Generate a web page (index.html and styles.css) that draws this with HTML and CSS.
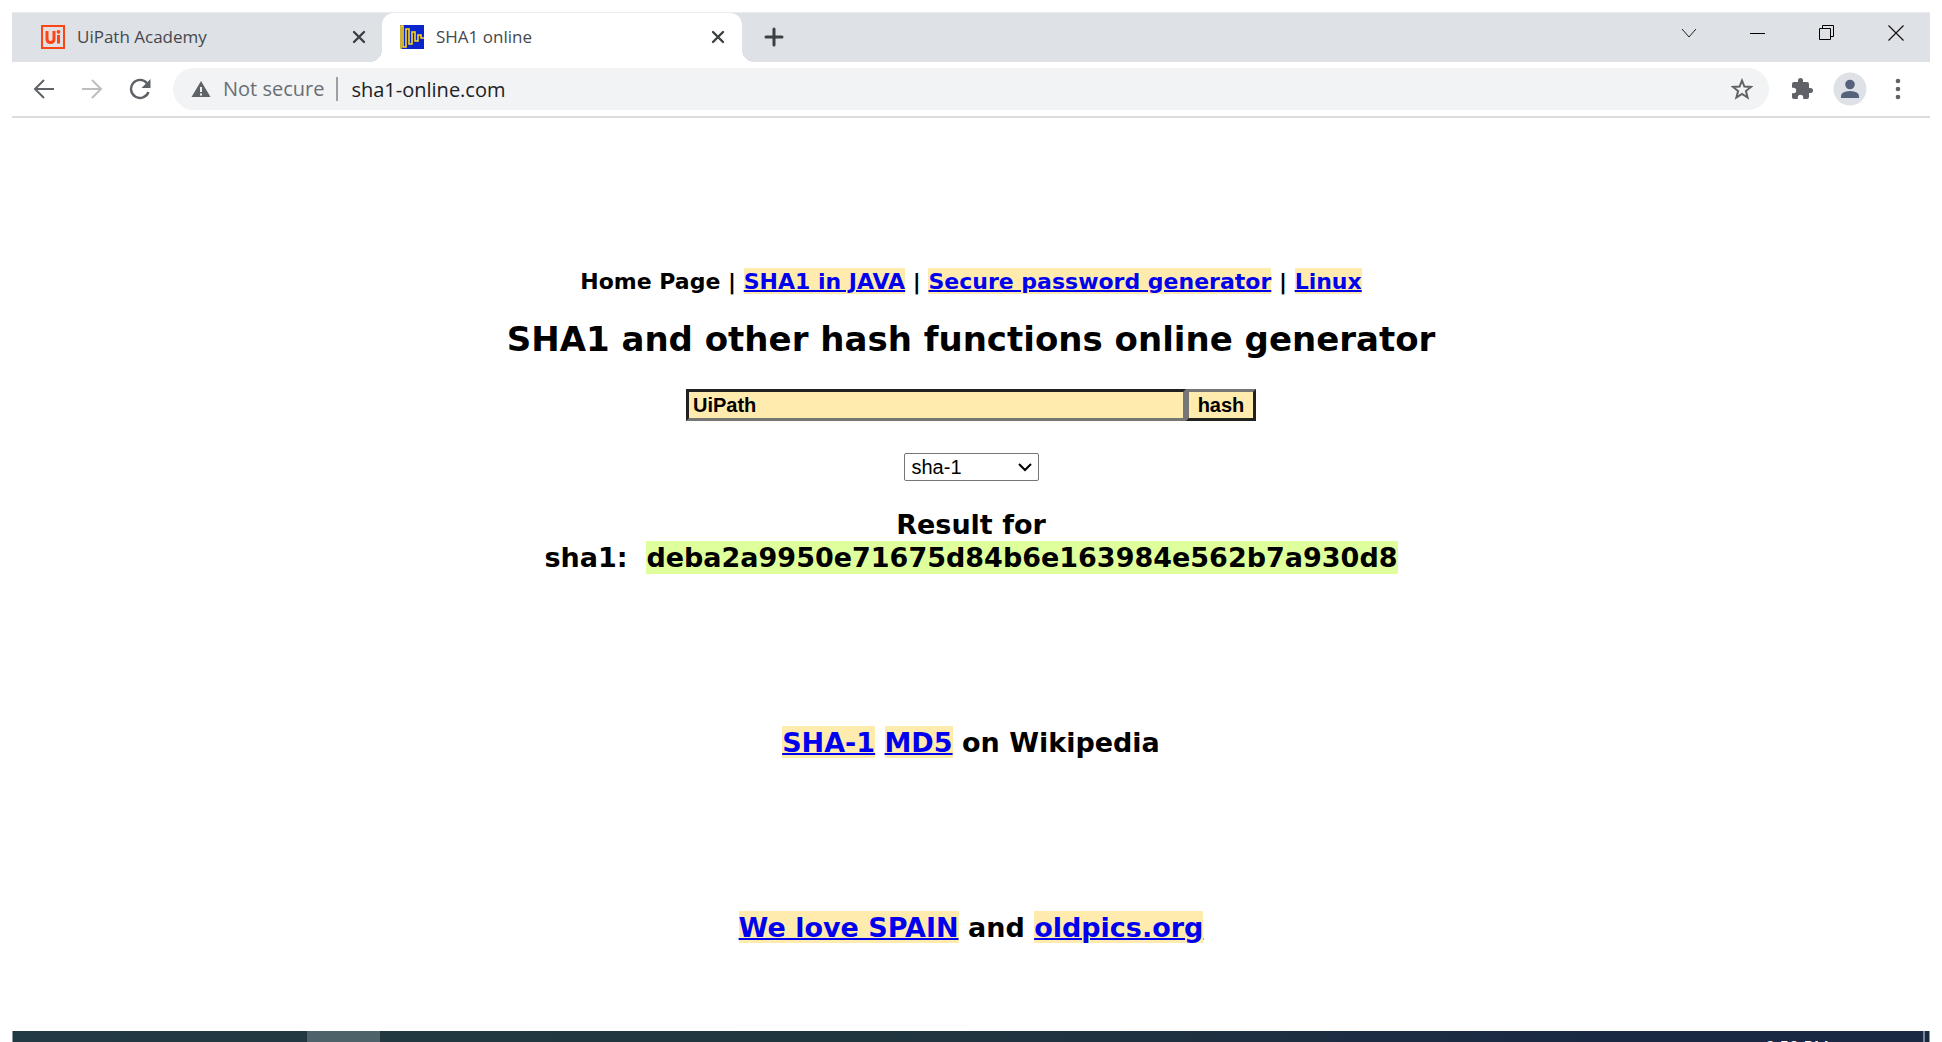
FILE: index.html
```html
<!DOCTYPE html>
<html lang="en">
<head>
<meta charset="utf-8">
<title>SHA1 online</title>
<link rel="stylesheet" href="styles.css">
</head>
<body>
<div class="window">
  <header class="tabstrip">
    <div class="tab">
      <svg class="favicon" viewBox="0 0 24 24"><rect width="24" height="24" fill="#fa4616"/><rect x="2" y="2" width="20" height="20" fill="#e4dfe2"/><path d="M6 6v8q0 3.500 3.500 3.500T13 14V6M17.500 10v8.500" fill="none" stroke="#fa4616" stroke-width="3"/><circle cx="17.500" cy="6.800" r="1.900" fill="#fa4616"/></svg>
      <span class="tab-title">UiPath Academy</span>
      <button class="tab-close" aria-label="Close UiPath Academy"><svg width="14" height="14" viewBox="0 0 14 14"><path d="M2 2l10 10M12 2L2 12" stroke="#3c4043" stroke-width="2.400" stroke-linecap="round"/></svg></button>
    </div>
    <div class="tab tab-active">
      <svg class="favicon" viewBox="0 0 24 24"><rect width="24" height="24" fill="#0b25cc"/><path d="M1 24V1h2v21h3V4h3v15h3V7h3v9h3v-6h3v3h3" fill="none" stroke="#ffd814" stroke-width="1.600"/></svg>
      <span class="tab-title">SHA1 online</span>
      <button class="tab-close" aria-label="Close SHA1 online"><svg width="14" height="14" viewBox="0 0 14 14"><path d="M2 2l10 10M12 2L2 12" stroke="#3c4043" stroke-width="2.400" stroke-linecap="round"/></svg></button>
    </div>
    <button class="new-tab" aria-label="New tab"><svg width="20" height="20" viewBox="0 0 20 20"><path d="M10 2v16M2 10h16" stroke="#3c4043" stroke-width="3" stroke-linecap="round"/></svg></button>
    <div class="window-controls">
      <button aria-label="Search tabs"><svg width="16" height="16" viewBox="0 0 16 16"><path d="M1 4l7 8 7-8" fill="none" stroke="#222"/></svg></button>
      <button aria-label="Minimize"><svg width="16" height="16" viewBox="0 0 16 16"><path d="M0 8.500h15" stroke="#000"/></svg></button>
      <button aria-label="Restore"><svg width="16" height="16" viewBox="0 0 16 16"><path d="M.5 3.500h11v11H.5zM3.500 3V.5h11v11H12" fill="none" stroke="#000"/></svg></button>
      <button aria-label="Close window"><svg width="16" height="16" viewBox="0 0 16 16"><path d="M.5.5l15 15M15.500.5l-15 15" stroke="#111" stroke-width="1.200"/></svg></button>
    </div>
  </header>
  <div class="toolbar">
    <button aria-label="Back"><svg width="22" height="22" viewBox="0 0 22 22"><path d="M21 11H2M11 2l-9 9 9 9" fill="none" stroke="#5f6368" stroke-width="2"/></svg></button>
    <button aria-label="Forward"><svg width="22" height="22" viewBox="0 0 22 22"><path d="M1 11h19M11 2l9 9-9 9" fill="none" stroke="#bcbec0" stroke-width="2"/></svg></button>
    <button aria-label="Reload"><svg width="22" height="22" viewBox="0 0 22 22"><path d="M19.500 14A9 9 0 1 1 18 5.200" fill="none" stroke="#5f6368" stroke-width="2.400"/><path d="M21.500 1v9h-9z" fill="#5f6368"/></svg></button>
    <div class="omnibox">
      <svg width="20" height="18" viewBox="0 0 20 18"><path d="M10 1l9.500 16H.5z" fill="#5f6368"/><path d="M10 7v5M10 13.500v2" stroke="#f1f3f4" stroke-width="2"/></svg>
      <span class="security">Not secure</span>
      <input class="address" type="text" value="sha1-online.com" aria-label="Address">
      <button class="star" aria-label="Bookmark this page"><svg width="22" height="22" viewBox="0 0 22 22"><path d="M11 2.500l2.400 6 6.600.4-5.100 4.200 1.700 6.500L11 16l-5.600 3.600 1.700-6.500L2 8.900l6.600-.4z" fill="none" stroke="#5f6368" stroke-width="2"/></svg></button>
    </div>
    <div class="actions">
      <button aria-label="Extensions"><svg width="24" height="24" viewBox="0 0 24 24"><path d="M20.500 11H19V7a2 2 0 0 0-2-2h-4V3.500a2.500 2.500 0 0 0-5 0V5H4a2 2 0 0 0-2 2v3.800h1.500a2.700 2.700 0 0 1 0 5.400H2V20a2 2 0 0 0 2 2h3.800v-1.500a2.700 2.700 0 0 1 5.400 0V22H17a2 2 0 0 0 2-2v-4h1.500a2.500 2.500 0 0 0 0-5z" fill="#5f6368"/></svg></button>
      <button class="profile" aria-label="Profile"><svg width="34" height="34" viewBox="0 0 34 34"><circle cx="17" cy="17" r="16.500" fill="#dee1e6"/><circle cx="17" cy="12.500" r="4.800" fill="#56627a"/><path d="M8 26v-2q0-4.500 9-5 9 .5 9 5v2z" fill="#56627a"/></svg></button>
      <button aria-label="Menu"><svg width="24" height="24" viewBox="0 0 24 24" fill="#5f6368"><circle cx="12" cy="4" r="2.300"/><circle cx="12" cy="12" r="2.300"/><circle cx="12" cy="20" r="2.300"/></svg></button>
    </div>
  </div>
  <main class="page">
    <nav class="nav">Home Page | <a href="#">SHA1 in JAVA</a> | <a href="#">Secure password generator</a> | <a href="#">Linux</a></nav>
    <h1>SHA1 and other hash functions online generator</h1>
    <form class="hash-form">
      <div class="entry">
        <input class="text" type="text" value="UiPath" aria-label="Text to hash"><button class="submit" type="button">hash</button>
      </div>
      <div class="select">
        <select aria-label="Hash function"><option>sha-1</option><option>md5</option></select>
        <svg class="arrow" width="14" height="9" viewBox="0 0 14 9"><path d="M1 1l6 6 6-6" fill="none" stroke="#000" stroke-width="2"/></svg>
      </div>
    </form>
    <p class="result">Result for<br>sha1:&nbsp; <mark>deba2a9950e71675d84b6e163984e562b7a930d8</mark></p>
    <p class="wiki"><a href="#">SHA-1</a> <a href="#">MD5</a> on Wikipedia</p>
    <p class="friends"><a href="#">We love SPAIN</a> and <a href="#">oldpics.org</a></p>
  </main>
</div>
<footer class="taskbar"><div class="task-active"></div><span class="clock">9:59 PM</span><div class="show-desktop"></div></footer>
</body>
</html>
```
FILE: styles.css
```css
* { box-sizing: border-box; }
body {
  margin: 0;
  height: 100vh;
  padding: 12px 12px 0;
  display: flex;
  flex-direction: column;
  overflow: hidden;
  background: #fff;
  color: #000;
  font-family: "Open Sans", "Noto Sans", sans-serif;
}
button { border: 0; padding: 0; background: none; display: flex; align-items: center; justify-content: center; }
svg { display: block; flex: none; }

.window { flex: 1; min-height: 0; display: flex; flex-direction: column; }
.tabstrip { display: flex; height: 50px; background: #dee1e6; border-top: 1px solid #e9ebee; }
.tab { width: 370px; display: flex; align-items: center; padding: 0 16px 2px 29px; font-size: 17px; color: #45494d; }
.tab-active {
  width: 360px;
  padding: 0 17px 2px 18px;
  background: #fff;
  border-radius: 12px 12px 0 0;
  position: relative;
}
.tab-active::before, .tab-active::after {
  content: "";
  position: absolute;
  bottom: 0;
  width: 12px;
  height: 12px;
}
.tab-active::before { left: -12px; background: radial-gradient(circle at 0 0, #dee1e6 12px, #fff 12px); }
.tab-active::after { right: -12px; background: radial-gradient(circle at 100% 0, #dee1e6 12px, #fff 12px); }
.favicon { width: 24px; height: 24px; margin-right: 12px; }
.tab-title { flex: 1; }
.new-tab { width: 64px; padding-bottom: 2px; }
.window-controls { display: flex; margin-left: auto; height: 39px; }
.window-controls button { width: 69px; }

.toolbar { display: flex; align-items: center; height: 56px; padding: 0 20px 0 8px; border-bottom: 2px solid #dadce0; }
.toolbar > button { width: 48px; height: 44px; }
.omnibox {
  flex: 1;
  display: flex;
  align-items: center;
  height: 42px;
  margin-left: 9px;
  padding: 0 16px 0 18px;
  border-radius: 21px;
  background: #f1f3f4;
  font-size: 20px;
}
.security { margin-left: 12px; padding-right: 12px; border-right: 2px solid #9aa0a6; line-height: 24px; color: #6a6e73; }
.address { flex: 1; border: 0; padding: 0 13px; background: none; font: inherit; color: #202124; }
.actions { display: flex; align-items: center; gap: 19px; margin-left: 21px; }

.page {
  flex: 1;
  display: flex;
  flex-direction: column;
  align-items: center;
  padding-top: 149px;
  font-family: Verdana, "DejaVu Sans", sans-serif;
  font-weight: 700;
  text-align: center;
}
.page a { background: #ffebad; color: #00e; padding-top: 1px; text-decoration-thickness: 2px; }
.nav { font-size: 22px; line-height: 30px; }
h1 { margin: 20px 0 28px; font-size: 34px; line-height: 44px; }
.hash-form { display: flex; flex-direction: column; align-items: center; gap: 32px; }
.entry { display: flex; height: 32px; }
.text {
  width: 500px;
  padding: 0 4px;
  border: 3px solid;
  border-color: #212121 #767676 #767676 #212121;
  background: #ffebad;
  font: 700 20px "Liberation Sans", Arial, sans-serif;
  color: #000;
}
.submit {
  width: 70px;
  border: 3px solid;
  border-color: #767676 #212121 #212121 #767676;
  background: #ffebad;
  font: 700 20px "Liberation Sans", Arial, sans-serif;
  color: #000;
}
.select { position: relative; }
select {
  display: block;
  appearance: none;
  width: 135px;
  height: 28px;
  padding: 0 7px;
  border: 1px solid #767676;
  border-radius: 2px;
  background: #fff;
  font: 20px "Liberation Sans", Arial, sans-serif;
  color: #000;
}
.arrow { position: absolute; right: 7px; top: 10px; pointer-events: none; }
p { margin: 0; font-size: 27px; line-height: 33px; }
.result { margin-top: 27px; }
.result mark { background: #dfff9c; color: #000; padding: 1px 0; }
.wiki { margin-top: 152px; }
.friends { margin-top: 152px; }

.taskbar {
  display: flex;
  flex: none;
  height: 11px;
  overflow: hidden;
  border-left: 1px solid #8796a0;
  border-right: 1px solid #8796a0;
  background: linear-gradient(90deg, #223a43 0%, #20363f 45%, #1a2843 85%);
}
.task-active { width: 73px; margin-left: 294px; background: #4e626a; }
.clock { margin-left: auto; padding-top: 6px; font-size: 17px; line-height: 20px; color: #fff; }
.show-desktop { width: 6px; margin-left: 94px; border-left: 2px solid #7c8495; }
```
